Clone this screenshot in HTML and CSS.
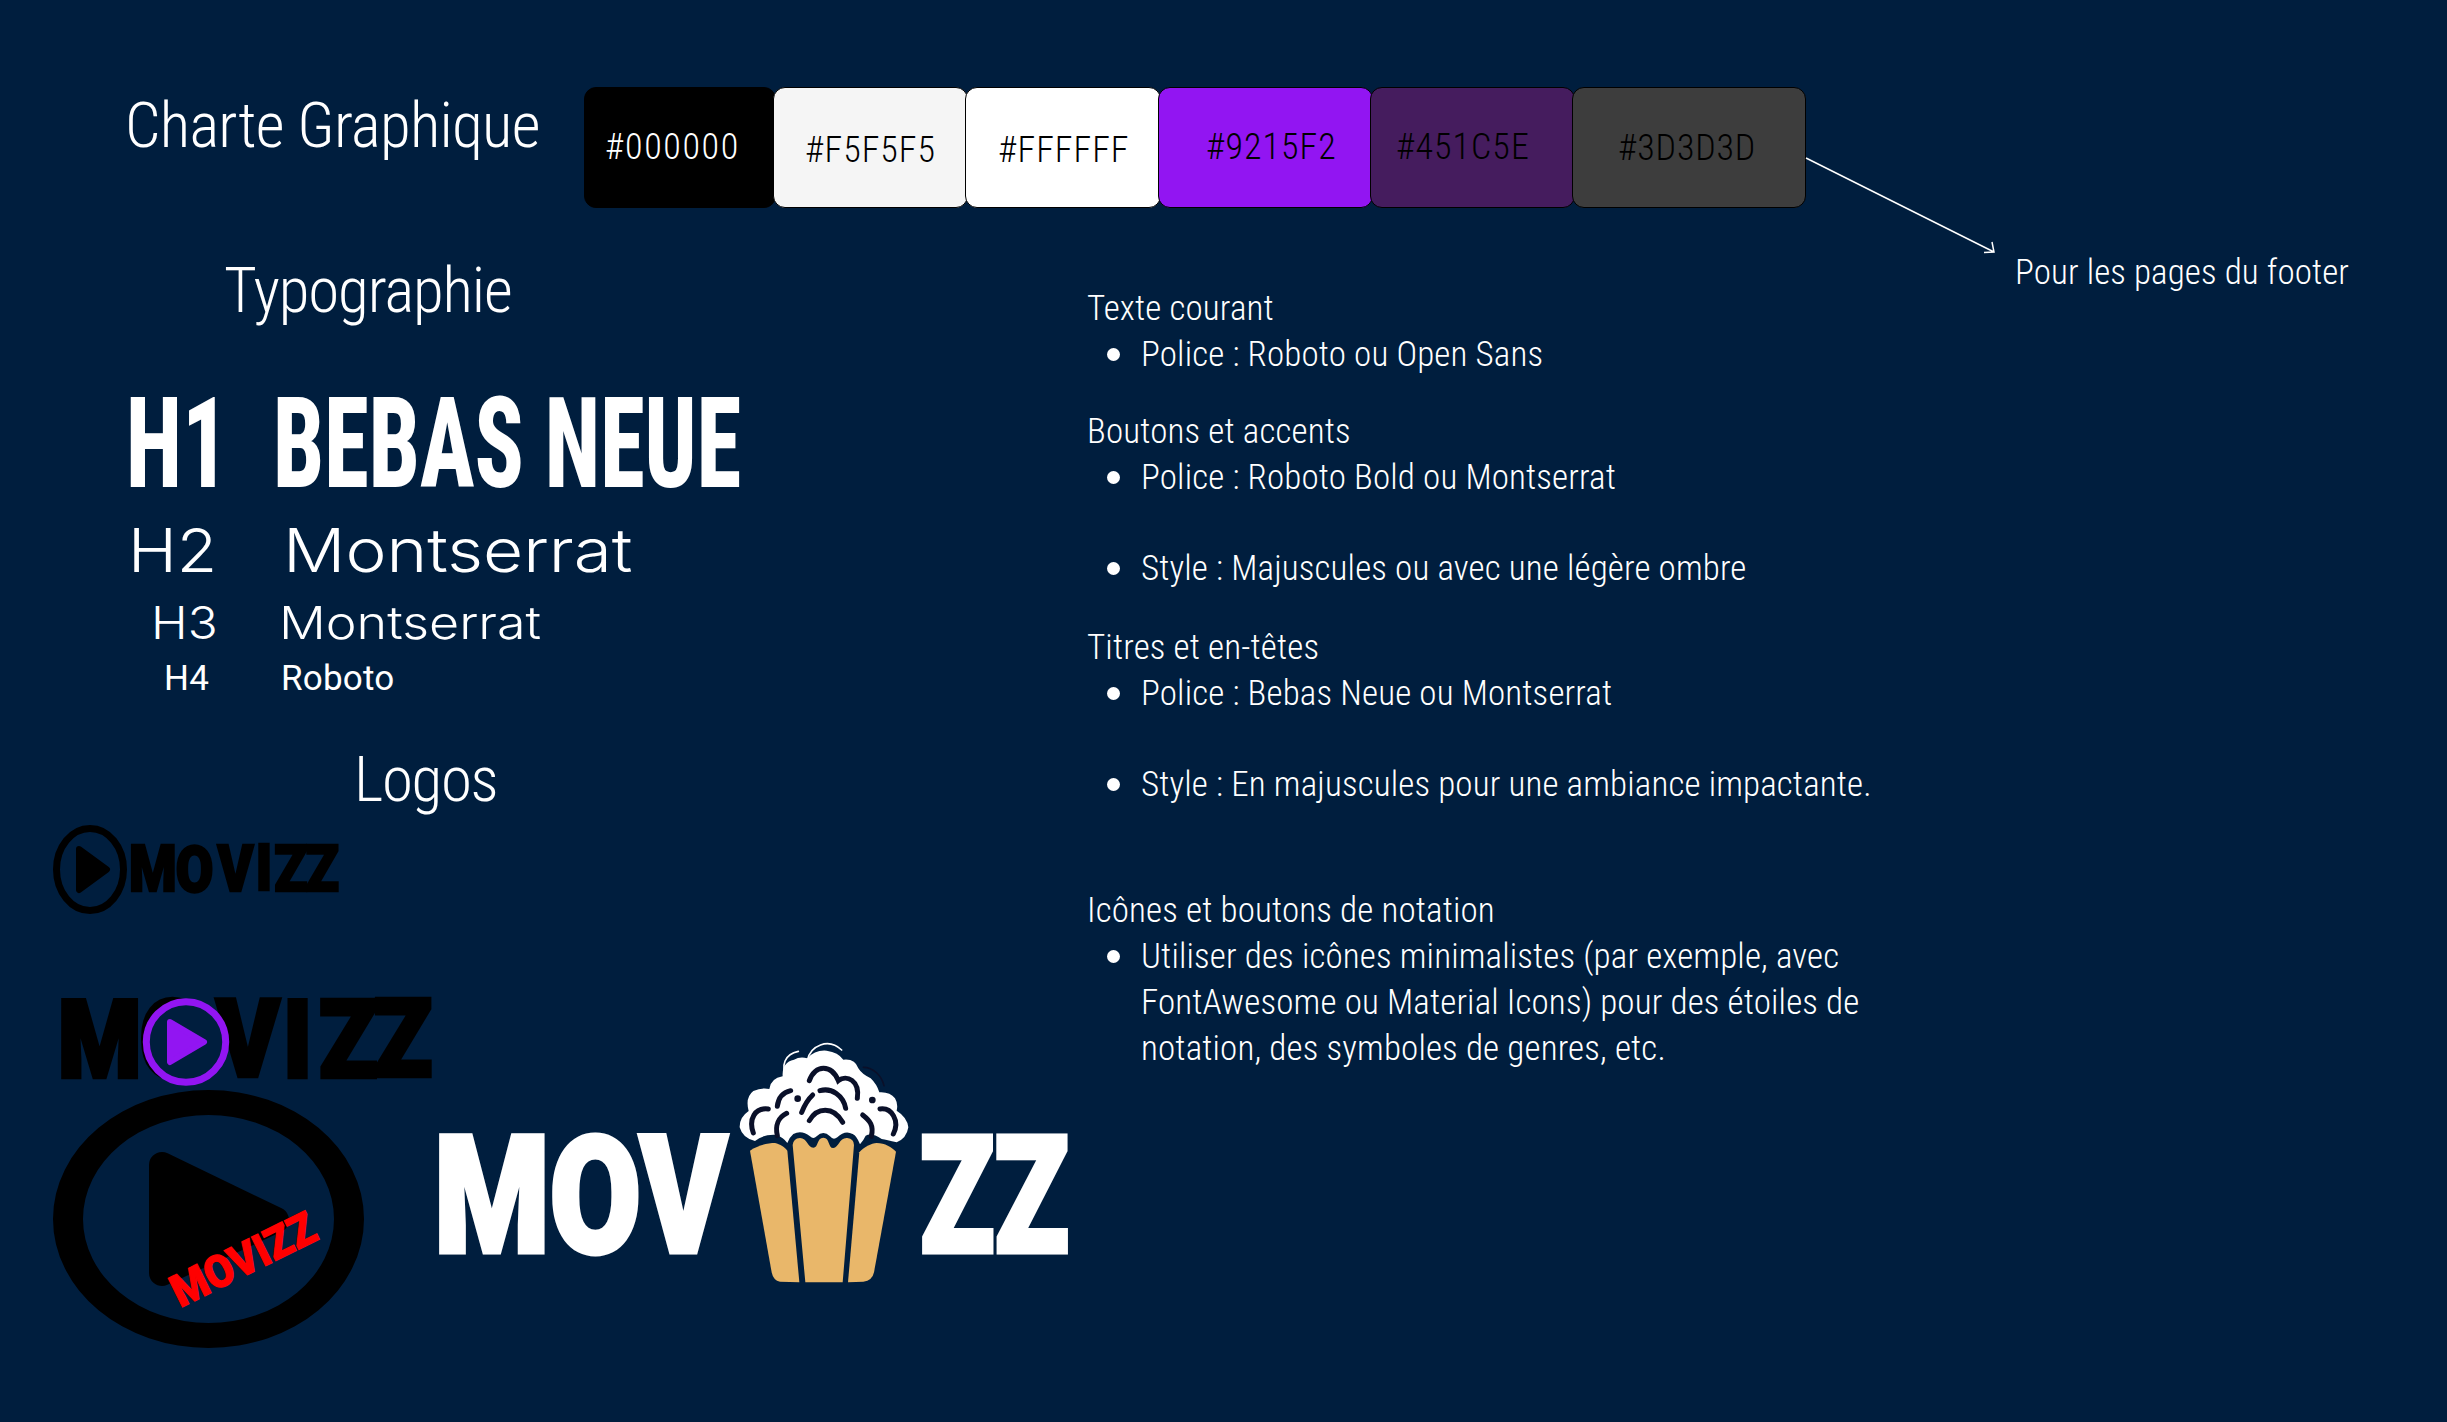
FILE: index.html
```html
<!doctype html>
<html lang="fr">
<head>
<meta charset="utf-8">
<title>Charte Graphique</title>
<link rel="stylesheet" href="styles.css">
</head>
<body>
<main class="page">
  <header class="top">
    <h1 class="heading heading-charte">Charte Graphique</h1>
    <div class="swatches">
      <div class="swatch sw-black">#000000</div>
      <div class="swatch sw-smoke">#F5F5F5</div>
      <div class="swatch sw-white">#FFFFFF</div>
      <div class="swatch sw-purple">#9215F2</div>
      <div class="swatch sw-plum">#451C5E</div>
      <div class="swatch sw-grey">#3D3D3D</div>
    </div>
  </header>

  <svg class="arrow" viewBox="0 0 200 110" width="200" height="110" aria-hidden="true">
    <path d="M0 0 L188 94 M178 94.500 L188 94 L186 84"/>
  </svg>
  <p class="note">Pour les pages du footer</p>

  <div class="columns">
    <section class="left">
      <h2 class="heading heading-typo">Typographie</h2>
      <div class="type-row row-h1"><span class="label"><span class="squeeze-h1">H1</span></span><span class="squeeze-bebas">BEBAS NEUE</span></div>
      <div class="type-row row-h2"><span class="label"><span class="wide-label">H2</span></span><span class="wide">Montserrat</span></div>
      <div class="type-row row-h3"><span class="label"><span class="wide-label">H3</span></span><span class="wide">Montserrat</span></div>
      <div class="type-row row-h4"><span class="label">H4</span><span>Roboto</span></div>
      <h2 class="heading heading-logos">Logos</h2>

      <svg class="logos" viewBox="0 812 1080 550" width="1080" height="550" role="img" aria-label="Logos Movizz">
        <!-- logo 1 -->
        <ellipse class="ring-black" cx="90" cy="870.500" rx="33.500" ry="41"/>
        <polygon class="tri-black" points="79,850 107,870.500 79,891"/>
        <text class="logo-type type-sm" transform="translate(129 892) scale(.85 1)" x="0 55 104 149 171 208" y="0 1 0 -1 0 0">MOVIZZ</text>

        <!-- logo 2 -->
        <text class="logo-type type-md" transform="translate(58 1078) scale(.88 1)" x="0 93 180 256 297 359" y="0 0 -1 0 0 -1">MOVIZZ</text>
        <ellipse class="ring-purple" cx="186" cy="1043" rx="39.700" ry="40.300"/>
        <polygon class="tri-purple" points="170,1023 204,1043 170,1063"/>

        <!-- logo 3 -->
        <path class="ring-big" fill-rule="evenodd" d="M53 1220a155.500 129 0 1 0 311 0a155.500 129 0 1 0 -311 0Z M83 1220a125.500 104 0 1 1 251 0a125.500 104 0 1 1 -251 0Z"/>
        <polygon class="tri-big" points="162,1166 276,1221 162,1274"/>
        <text class="logo-red" x="243" y="1276" text-anchor="middle" textLength="156" lengthAdjust="spacingAndGlyphs" transform="rotate(-26.300 243 1260)">MOVIZZ</text>

        <!-- logo 4 -->
        <text class="logo-big" x="434" y="1253" textLength="293" lengthAdjust="spacingAndGlyphs">MOV</text>
        <text class="logo-big" x="920" y="1253" textLength="149" lengthAdjust="spacingAndGlyphs">ZZ</text>
        <g transform="translate(700 1020) scale(.33333)">
          <path class="pop-white" d="M165 366Q128 358 119 325Q118 295 146 276Q135 235 160 216Q185 205 208 210Q212 178 248 172Q245 130 282 122Q300 112 322 118Q345 92 380 95Q415 100 430 122Q465 118 475 148Q485 165 512 178Q530 195 538 220Q570 218 585 238Q595 255 590 275Q622 295 625 325Q620 358 590 370Q560 362 545 360Q515 340 497 350Q490 365 480 376Q470 350 458 345Q435 332 412 355Q400 365 390 352Q370 332 350 352Q340 362 330 352Q305 332 280 345Q268 355 262 372Q250 355 230 348Q190 345 165 366Z"/>
          <path class="pop-gold" d="M150 395C175 378 205 372 225 372C240 375 255 385 262 395L298 790L240 788Q220 785 215 760Z"/>
          <path class="pop-gold" d="M278 378Q280 358 300 357C322 357 322 385 340 386C356 386 350 356 370 356C390 356 384 388 400 387C416 386 418 355 442 357Q462 360 462 378L428 790L316 790Z"/>
          <path class="pop-gold" d="M478 400C490 385 515 372 530 372C555 372 575 385 588 398L522 760Q517 785 490 788L444 790Z"/>
          <g class="pop-ink">
            <path d="M160 342C145 300 165 265 205 270"/>
            <path d="M232 262C235 235 250 220 272 215"/>
            <path d="M232 350C225 320 235 295 260 283"/>
            <path d="M305 280C315 255 325 240 338 228"/>
            <path d="M360 215C395 205 430 230 437 268"/>
            <path d="M328 305C350 265 400 260 428 310"/>
            <path d="M328 185C345 135 395 135 415 185C440 165 480 185 472 238"/>
            <path d="M488 288C510 305 522 320 514 352"/>
            <path d="M540 270C575 265 600 305 580 345"/>
          </g>
          <circle class="pop-dot" cx="293" cy="239" r="10"/>
          <circle class="pop-dot" cx="517" cy="243" r="10"/>
          <path class="pop-thin-ink" d="M490 145C520 145 545 170 552 200"/>
          <path class="pop-thin-white" d="M262 175C240 140 255 105 295 97"/>
          <path class="pop-thin-white" d="M322 125C330 80 385 55 425 93"/>
        </g>
      </svg>
    </section>

    <section class="right">
      <p class="line">Texte courant</p>
      <ul class="bullets gap-first">
        <li>Police : Roboto ou Open Sans</li>
      </ul>
      <p class="line">Boutons et accents</p>
      <ul class="bullets gap-item">
        <li>Police : Roboto Bold ou Montserrat</li>
      </ul>
      <ul class="bullets gap-group">
        <li>Style : Majuscules ou avec une légère ombre</li>
      </ul>
      <p class="line">Titres et en-têtes</p>
      <ul class="bullets gap-item">
        <li>Police : Bebas Neue ou Montserrat</li>
      </ul>
      <ul class="bullets gap-section">
        <li>Style : En majuscules pour une ambiance impactante.</li>
      </ul>
      <p class="line">Icônes et boutons de notation</p>
      <ul class="bullets">
        <li>Utiliser des icônes minimalistes (par exemple, avec FontAwesome ou Material Icons) pour des étoiles de notation, des symboles de genres, etc.</li>
      </ul>
    </section>
  </div>
</main>
</body>
</html>
```
FILE: styles.css
```css
* { box-sizing: border-box; }
html, body { margin: 0; padding: 0; background: #001e3e; }
body { font-family: "Roboto", "Liberation Sans", sans-serif; color: #fff; }

.page {
  position: relative;
  width: 2447px;
  height: 1422px;
  overflow: hidden;
  background: #001e3e;
}

/* ---------- header ---------- */
.top {
  display: flex;
  align-items: flex-start;
  height: 208px;
  padding: 87px 0 0 125px;
}
.heading {
  margin: 0;
  font-family: "Roboto", sans-serif;
  font-size: 63px;
  font-weight: 300;
  font-stretch: 75%;
  line-height: 1;
  white-space: nowrap;
}
.heading-charte { margin-top: 7px; width: 459px; letter-spacing: -.75px; }
.heading-typo { margin-top: 51px; padding-left: 224px; letter-spacing: -1.1px; }
.heading-logos { margin-top: 52px; padding-left: 354px; letter-spacing: -1.3px; }

.swatches { display: flex; }
.swatch {
  display: flex;
  align-items: center;
  height: 121px;
  margin-left: -3px;
  border: 1px solid #000;
  border-radius: 12px;
  color: #000;
  font-size: 36px;
  font-weight: 300;
  font-stretch: 75%;
  letter-spacing: 1px;
}
.sw-black { width: 192px; margin-left: 0; padding: 0 0 2px 20px; background: #000; color: #fff; letter-spacing: 1.6px; }
.sw-smoke { width: 195px; padding: 4px 0 0 31px; background: #f5f5f5; }
.sw-white { width: 196px; padding: 4px 0 0 32px; background: #fff; }
.sw-purple { width: 215px; padding: 0 0 1px 47px; background: #9215f2; }
.sw-plum { width: 205px; padding: 0 0 2px 25px; background: #451c5e; }
.sw-grey { width: 234px; padding: 1px 0 0 45px; background: #3d3d3d; letter-spacing: .8px; }

.arrow {
  position: absolute;
  left: 1806px;
  top: 158px;
  overflow: visible;
}
.arrow path { fill: none; stroke: #fff; stroke-width: 1.5; }
.note {
  position: absolute;
  left: 2015px;
  top: 250px;
  margin: 0;
  font-size: 35px;
  font-weight: 300;
  font-stretch: 75%;
  line-height: 46px;
  letter-spacing: .1px;
  white-space: nowrap;
}

/* ---------- columns ---------- */
.columns { display: grid; grid-template-columns: 1087px 1fr; }
.left { min-width: 0; }

.type-row {
  display: grid;
  align-items: start;
  line-height: 1;
  white-space: nowrap;
}
.label { display: block; }
.row-h1 {
  grid-template-columns: 278px 1fr;
  margin-top: 59px;
  padding-left: 0;
  font-size: 126px;
  font-weight: 800;
  font-stretch: 75%;
}
.row-h1 .label { padding-left: 126px; }
.squeeze-h1, .squeeze-bebas { display: inline-block; transform-origin: left center; }
.squeeze-h1 { transform: scaleX(.725); }
.squeeze-bebas { transform: scaleX(.72); margin-left: -5px; }
.row-h2 {
  grid-template-columns: 283px 1fr;
  margin-top: 13px;
  font-family: "Inter", sans-serif;
  font-size: 60px;
  font-weight: 300;
}
.row-h2 .label { padding-left: 128px; }
.row-h3 {
  grid-template-columns: 279px 1fr;
  margin-top: 20px;
  font-family: "Inter", sans-serif;
  font-size: 45px;
  font-weight: 300;
}
.row-h3 .label { padding-left: 151px; }
.wide, .wide-label { display: inline-block; transform-origin: left center; }
.wide { transform: scaleX(1.155); }
.wide-label { transform: scaleX(1.1); }
.row-h4 {
  grid-template-columns: 281px 1fr;
  margin-top: 16px;
  font-size: 35px;
  font-weight: 380;
  letter-spacing: .2px;
}
.row-h4 .label { padding-left: 164px; }

/* ---------- logos ---------- */
.logos { display: block; overflow: visible; }
.logo-type { font-family: "Roboto", sans-serif; font-weight: 900; fill: #000; stroke: #000; }
.type-sm { font-size: 64px; stroke-width: 2.5; }
.type-md { font-size: 108px; stroke-width: 4.5; }
.ring-black { fill: none; stroke: #000; stroke-width: 7; }
.tri-black { fill: #000; stroke: #000; stroke-width: 6; stroke-linejoin: round; }
.ring-purple { fill: #001e3e; stroke: #9215f2; stroke-width: 7; }
.tri-purple { fill: #9215f2; stroke: #9215f2; stroke-width: 6; stroke-linejoin: round; }
.ring-big { fill: #000; }
.tri-big { fill: #000; stroke: #000; stroke-width: 26; stroke-linejoin: round; }
.logo-red { font-family: "Roboto", sans-serif; font-size: 45px; font-weight: 900; fill: #f00; stroke: #f00; stroke-width: 1.2; }
.logo-big { font-family: "Roboto", sans-serif; font-size: 164px; font-weight: 900; fill: #fff; stroke: #fff; stroke-width: 5; }
.pop-white { fill: #fff; }
.pop-gold { fill: #e9b76a; }
.pop-ink path { fill: none; stroke: #0a1029; stroke-width: 15; stroke-linecap: round; }
.pop-dot { fill: #0a1029; }
.pop-thin-ink { fill: none; stroke: #0a1029; stroke-width: 5; stroke-linecap: round; }
.pop-thin-white { fill: none; stroke: #fff; stroke-width: 5; stroke-linecap: round; }

/* ---------- right column ---------- */
.right {
  padding-top: 78px;
  font-size: 35px;
  font-weight: 300;
  font-stretch: 75%;
  line-height: 46px;
  letter-spacing: .14px;
}
.line { margin: 0; }
.bullets { margin: 0; padding: 0 0 0 54px; width: 790px; list-style: none; }
.bullets li { position: relative; }
.bullets li::before {
  content: "";
  position: absolute;
  left: -34px;
  top: 16px;
  width: 13px;
  height: 13px;
  border-radius: 50%;
  background: #fff;
}
.gap-item { margin-bottom: 45px; }
.gap-first { margin-bottom: 31px; }
.gap-group { margin-bottom: 33px; }
.gap-section { margin-bottom: 80px; }
```
